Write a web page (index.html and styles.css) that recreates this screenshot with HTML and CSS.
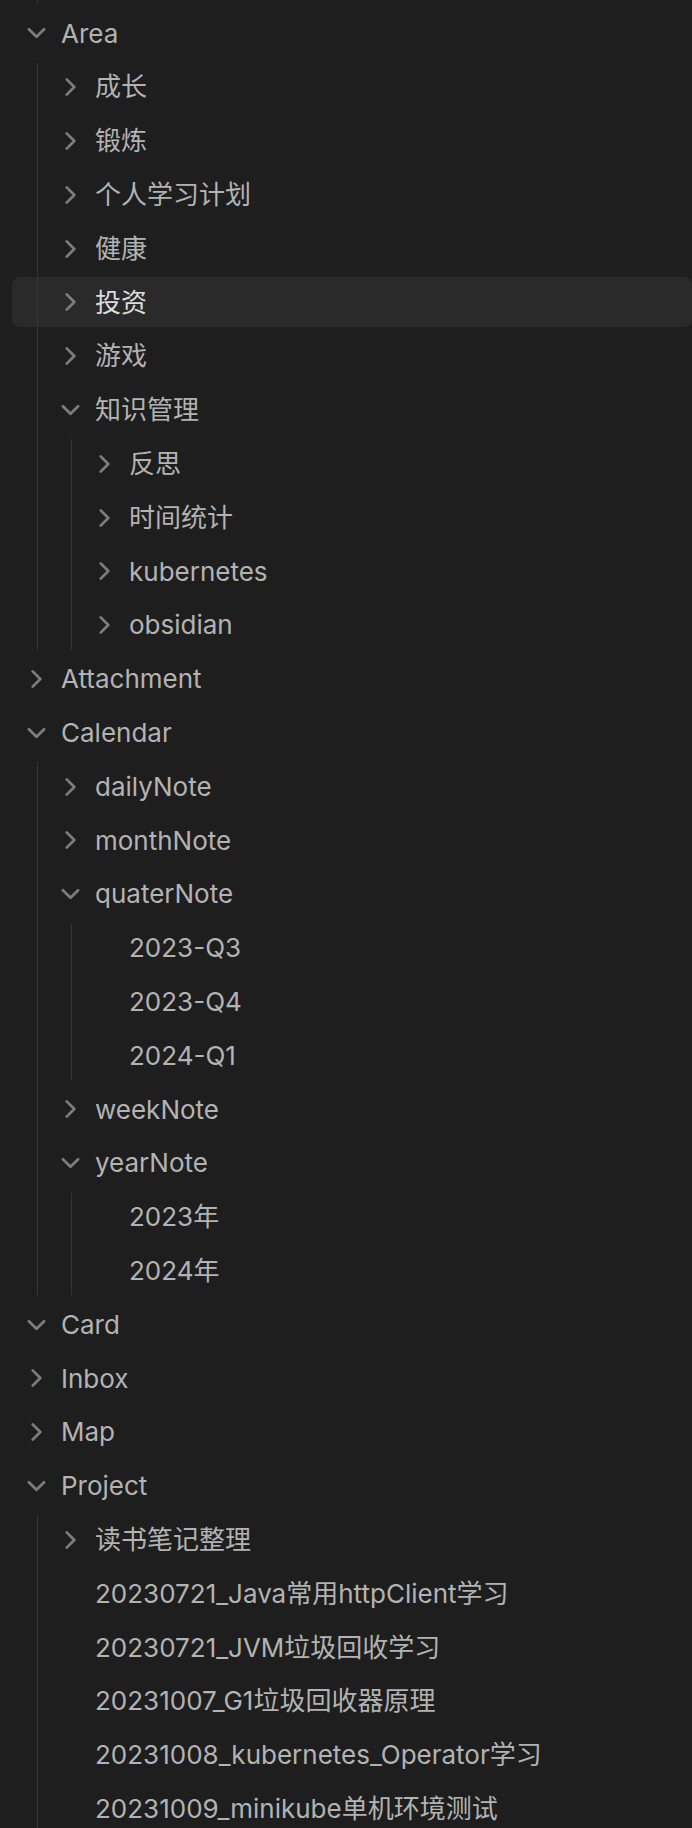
FILE: index.html
```html
<!DOCTYPE html>
<html lang="zh">
<head>
<meta charset="utf-8">
<title>Files</title>
<link rel="stylesheet" href="styles.css">
</head>
<body>
<div class="tree">
  <div class="children tail"></div>

  <div class="row l0"><svg class="chev" viewBox="0 0 24 24"><path d="m6 9 6 6 6-6"/></svg><span class="title">Area</span></div>
  <div class="children g1">
    <div class="row l1"><svg class="chev" viewBox="0 0 24 24"><path d="m9 18 6-6-6-6"/></svg><span class="title">成长</span></div>
    <div class="row l1"><svg class="chev" viewBox="0 0 24 24"><path d="m9 18 6-6-6-6"/></svg><span class="title">锻炼</span></div>
    <div class="row l1"><svg class="chev" viewBox="0 0 24 24"><path d="m9 18 6-6-6-6"/></svg><span class="title">个人学习计划</span></div>
    <div class="row l1"><svg class="chev" viewBox="0 0 24 24"><path d="m9 18 6-6-6-6"/></svg><span class="title">健康</span></div>
    <div class="row l1 hover"><svg class="chev" viewBox="0 0 24 24"><path d="m9 18 6-6-6-6"/></svg><span class="title">投资</span></div>
    <div class="row l1"><svg class="chev" viewBox="0 0 24 24"><path d="m9 18 6-6-6-6"/></svg><span class="title">游戏</span></div>
    <div class="row l1"><svg class="chev" viewBox="0 0 24 24"><path d="m6 9 6 6 6-6"/></svg><span class="title">知识管理</span></div>
    <div class="children g2">
      <div class="row l2"><svg class="chev" viewBox="0 0 24 24"><path d="m9 18 6-6-6-6"/></svg><span class="title">反思</span></div>
      <div class="row l2"><svg class="chev" viewBox="0 0 24 24"><path d="m9 18 6-6-6-6"/></svg><span class="title">时间统计</span></div>
      <div class="row l2"><svg class="chev" viewBox="0 0 24 24"><path d="m9 18 6-6-6-6"/></svg><span class="title">kubernetes</span></div>
      <div class="row l2"><svg class="chev" viewBox="0 0 24 24"><path d="m9 18 6-6-6-6"/></svg><span class="title">obsidian</span></div>
    </div>
  </div>

  <div class="row l0"><svg class="chev" viewBox="0 0 24 24"><path d="m9 18 6-6-6-6"/></svg><span class="title">Attachment</span></div>

  <div class="row l0"><svg class="chev" viewBox="0 0 24 24"><path d="m6 9 6 6 6-6"/></svg><span class="title">Calendar</span></div>
  <div class="children g1">
    <div class="row l1"><svg class="chev" viewBox="0 0 24 24"><path d="m9 18 6-6-6-6"/></svg><span class="title">dailyNote</span></div>
    <div class="row l1"><svg class="chev" viewBox="0 0 24 24"><path d="m9 18 6-6-6-6"/></svg><span class="title">monthNote</span></div>
    <div class="row l1"><svg class="chev" viewBox="0 0 24 24"><path d="m6 9 6 6 6-6"/></svg><span class="title">quaterNote</span></div>
    <div class="children g2">
      <div class="row l2"><span class="spacer"></span><span class="title">2023-Q3</span></div>
      <div class="row l2"><span class="spacer"></span><span class="title">2023-Q4</span></div>
      <div class="row l2"><span class="spacer"></span><span class="title">2024-Q1</span></div>
    </div>
    <div class="row l1"><svg class="chev" viewBox="0 0 24 24"><path d="m9 18 6-6-6-6"/></svg><span class="title">weekNote</span></div>
    <div class="row l1"><svg class="chev" viewBox="0 0 24 24"><path d="m6 9 6 6 6-6"/></svg><span class="title">yearNote</span></div>
    <div class="children g2">
      <div class="row l2"><span class="spacer"></span><span class="title">2023年</span></div>
      <div class="row l2"><span class="spacer"></span><span class="title">2024年</span></div>
    </div>
  </div>

  <div class="row l0"><svg class="chev" viewBox="0 0 24 24"><path d="m6 9 6 6 6-6"/></svg><span class="title">Card</span></div>
  <div class="row l0"><svg class="chev" viewBox="0 0 24 24"><path d="m9 18 6-6-6-6"/></svg><span class="title">Inbox</span></div>
  <div class="row l0"><svg class="chev" viewBox="0 0 24 24"><path d="m9 18 6-6-6-6"/></svg><span class="title">Map</span></div>
  <div class="row l0"><svg class="chev" viewBox="0 0 24 24"><path d="m6 9 6 6 6-6"/></svg><span class="title">Project</span></div>
  <div class="children g1 open-end">
    <div class="row l1"><svg class="chev" viewBox="0 0 24 24"><path d="m9 18 6-6-6-6"/></svg><span class="title">读书笔记整理</span></div>
    <div class="row l1"><span class="spacer"></span><span class="title">20230721_Java常用httpClient学习</span></div>
    <div class="row l1"><span class="spacer"></span><span class="title">20230721_JVM垃圾回收学习</span></div>
    <div class="row l1"><span class="spacer"></span><span class="title">20231007_G1垃圾回收器原理</span></div>
    <div class="row l1"><span class="spacer"></span><span class="title">20231008_kubernetes_Operator学习</span></div>
    <div class="row l1"><span class="spacer"></span><span class="title">20231009_minikube单机环境测试</span></div>
  </div>
</div>
</body>
</html>
```

FILE: styles.css
```css
html, body {
  margin: 0;
  padding: 0;
  background: #1e1e1e;
  height: 100%;
  overflow: hidden;
}

.tree {
  display: flex;
  flex-direction: column;
  padding-left: 12px;
  font-family: "Inter", "Noto Sans CJK SC", sans-serif;
  font-size: 26px;
  line-height: 1.3;
  color: #b3b3b3;
}

.row {
  flex: none;
  display: flex;
  align-items: center;
  height: 49.8px;
  margin: 2px 0;
  border-radius: 8px;
  white-space: nowrap;
  box-sizing: border-box;
  padding-top: 1px;
}

.row.l0 { padding-left: 14px; }
.row.l1 { padding-left: 48px; }
.row.l2 { padding-left: 82px; }

.row.hover {
  background: #2a2a2a;
  color: #dcdcdc;
}

.chev,
.spacer {
  flex: none;
  width: 21px;
  height: 30px;
  margin-right: 14px;
}

.chev {
  fill: none;
  stroke: #7c7c7c;
  stroke-width: 2.2;
  stroke-linecap: round;
  stroke-linejoin: round;
  overflow: visible;
}

.chev path {
  transform-origin: 12px 12px;
  transform: scale(1.45);
}

.title {
  display: block;
}

.children {
  position: relative;
  display: flex;
  flex-direction: column;
}

.children::before {
  content: "";
  position: absolute;
  top: 3px;
  bottom: 2px;
  width: 1px;
  background: #353535;
  z-index: 1;
}

.children.g1::before { left: 25px; }
.children.g2::before { left: 59px; }

.children.tail {
  height: 6.1px;
}
.children.tail::before {
  left: 25px;
  top: 0;
}

.children.open-end::before {
  bottom: 0;
}
```
